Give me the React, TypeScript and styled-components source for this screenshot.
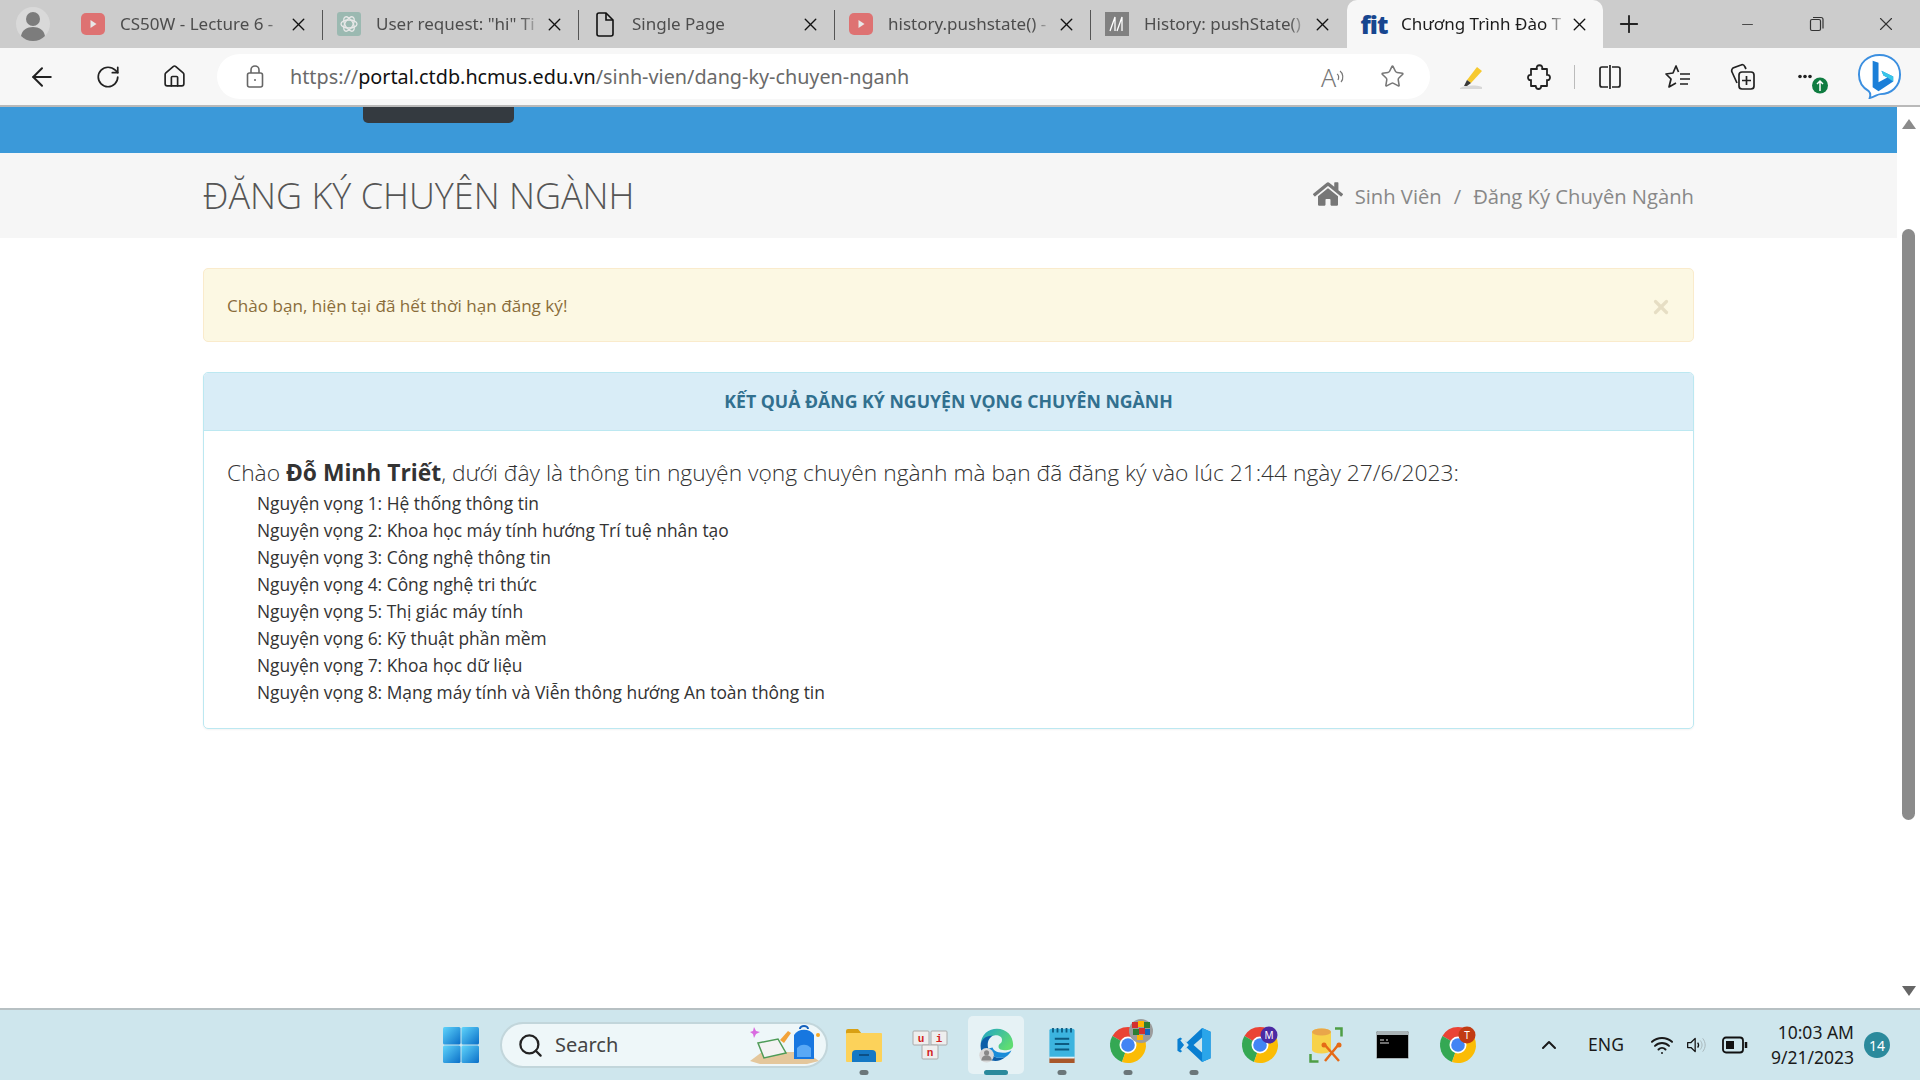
import React from "react";
import styled, { createGlobalStyle } from "styled-components";
import {
  ArrowLeft,
  ChevronUp,
  Home,
  Minus,
  Plus,
  RotateCw,
  Search,
  Star,
  Wifi,
  X,
} from "lucide-react";
import { FaHome } from "react-icons/fa";

const GlobalStyle = createGlobalStyle`
  html, body { margin: 0; padding: 0; height: 100%; overflow: hidden; background: #fff; }
  #root { height: 100%; }
  * { box-sizing: border-box; }
`;

const Screen = styled.div`
  width: 1920px;
  height: 1080px;
  display: flex;
  flex-direction: column;
  font-family: "Open Sans", "Liberation Sans", sans-serif;
  overflow: hidden;
`;

/* browser chrome */
const TabStrip = styled.div`
  height: 48px;
  flex: none;
  display: flex;
  background: #cccccc;
  font-family: "Noto Sans", "Open Sans", sans-serif;
`;

const ProfileSlot = styled.div`
  width: 67px;
  flex: none;
  display: flex;
  justify-content: center;
  align-items: center;
  padding-right: 1px;
`;

const Tab = styled.div<{ $active?: boolean; $last?: boolean }>`
  width: 256px;
  height: 48px;
  flex: none;
  display: flex;
  align-items: center;
  padding-left: ${(p) => (p.$active ? "15px" : "14px")};
  position: relative;
  background: ${(p) => (p.$active ? "#f7f7f7" : "transparent")};
  border-radius: ${(p) => (p.$active ? "10px 10px 0 0" : "0")};
  color: ${(p) => (p.$active ? "#1c1c1c" : "#4d4d4d")};

  &::after {
    content: "";
    display: ${(p) => (p.$active || p.$last ? "none" : "block")};
    position: absolute;
    right: 0;
    top: 10px;
    height: 30px;
    width: 1px;
    background: #555;
  }
`;

const FavSlot = styled.div<{ $dim?: boolean }>`
  width: 24px;
  height: 24px;
  flex: none;
  display: flex;
  align-items: center;
  justify-content: center;
  opacity: ${(p) => (p.$dim ? 0.55 : 1)};
`;

const TabTitle = styled.div`
  margin-left: 15px;
  width: 165px;
  flex: none;
  font-size: 17px;
  padding-bottom: 2px;
  white-space: nowrap;
  overflow: hidden;
  -webkit-mask-image: linear-gradient(to right, #000 88%, transparent 100%);
  mask-image: linear-gradient(to right, #000 88%, transparent 100%);
`;

const TabClose = styled.div`
  margin-left: 1px;
  width: 24px;
  height: 24px;
  display: flex;
  align-items: center;
  justify-content: center;
  color: #111;
`;

const FitLogo = styled.span`
  font-family: "Open Sans", sans-serif;
  font-weight: 800;
  font-size: 25px;
  letter-spacing: -1px;
  color: #17468f;
  line-height: 24px;
`;

const NewTab = styled.div`
  width: 52px;
  flex: none;
  display: flex;
  align-items: center;
  justify-content: center;
  color: #222;
`;

const WindowButtons = styled.div`
  margin-left: auto;
  display: flex;
  color: #333;
`;

const WindowButton = styled.div`
  width: 69px;
  display: flex;
  align-items: center;
  justify-content: center;
`;

const Toolbar = styled.div`
  height: 57px;
  flex: none;
  display: flex;
  align-items: center;
  background: #f7f7f7;
`;

const ToolButton = styled.div<{ $w: number }>`
  width: ${(p) => p.$w}px;
  height: 45px;
  flex: none;
  display: flex;
  align-items: center;
  justify-content: center;
  color: #222;
`;

const AddressBar = styled.div`
  width: 1213px;
  height: 45px;
  flex: none;
  display: flex;
  align-items: center;
  background: #fff;
  border-radius: 23px;
  padding-left: 29px;
  font-family: "Noto Sans", "Open Sans", sans-serif;
  font-size: 19.8px;
  color: #6a6a6a;
`;

const AddressText = styled.div`
  margin-left: 26px;
  padding-bottom: 1px;
  white-space: nowrap;
  & b {
    font-weight: 400;
    color: #111;
  }
`;

const AddressEnd = styled.div`
  margin-left: auto;
  display: flex;
  align-items: center;
  color: #777;
`;

const ReadAloud = styled.div`
  width: 59px;
  display: flex;
  align-items: center;
  justify-content: center;
  font-family: "Noto Sans", sans-serif;
  font-size: 25px;
  font-weight: 300;
  line-height: 30px;
  color: #777;
`;

const StarSlot = styled.div`
  width: 59px;
  margin-right: 8px;
  display: flex;
  align-items: center;
  justify-content: center;
`;

const ToolSep = styled.div`
  width: 1px;
  height: 24px;
  flex: none;
  background: #bbb;
`;

const BrowserRule = styled.div`
  height: 2px;
  flex: none;
  background: #b9b9b9;
`;

/* page */
const Viewport = styled.div`
  flex: 1;
  min-height: 0;
  display: flex;
  background: #fff;
`;

const Page = styled.div`
  flex: 1;
  min-width: 0;
  display: flex;
  flex-direction: column;
`;

const TopBand = styled.div`
  height: 46px;
  flex: none;
  background: #3b99d9;
  padding-left: 363px;
`;

const MenuTab = styled.div`
  width: 151px;
  height: 16px;
  background: #343a40;
  border-radius: 0 0 5px 5px;
`;

const TitleBand = styled.div`
  height: 85px;
  flex: none;
  display: flex;
  align-items: center;
  justify-content: space-between;
  padding: 0 203px;
  background: #f6f6f6;
`;

const PageTitle = styled.h1`
  margin: 0;
  font-size: 36px;
  font-weight: 300;
  color: #555;
`;

const Crumbs = styled.div`
  display: flex;
  align-items: center;
  font-size: 20.2px;
  color: #888;
`;

const CrumbDivider = styled.span`
  margin: 0 12px;
`;

const CrumbIcon = styled.span`
  display: flex;
  margin-right: 12px;
  margin-top: -3px;
`;

const Content = styled.div`
  padding: 30px 203px 0;
  display: flex;
  flex-direction: column;
  gap: 30px;
`;

const Alert = styled.div`
  height: 74px;
  display: flex;
  align-items: center;
  justify-content: space-between;
  padding: 0 23px;
  background: #fcf8e3;
  border: 1px solid #faebcc;
  border-radius: 5px;
  color: #8a6d3b;
  font-size: 17.1px;
`;

const AlertClose = styled.span`
  color: #e6dec4;
  display: flex;
  margin-top: 3px;
  margin-right: -2px;
`;

const Panel = styled.div`
  border: 1px solid #bce8f1;
  border-radius: 5px;
  box-shadow: 0 1px 2px rgba(0, 0, 0, 0.05);
  overflow: hidden;
`;

const PanelHeading = styled.div`
  height: 58px;
  display: flex;
  align-items: center;
  justify-content: center;
  padding-bottom: 2px;
  background: #d9edf7;
  border-bottom: 1px solid #bce8f1;
  color: #31708f;
  font-weight: 700;
  font-size: 17.7px;
`;

const PanelBody = styled.div`
  padding: 26px 23px 22px;
  color: #333;
`;

const Greeting = styled.div`
  font-size: 22.8px;
  font-weight: 300;
  line-height: 32px;
  margin-bottom: 1px;
  & b {
    font-weight: 700;
  }
`;

const Wishes = styled.ul`
  list-style: none;
  margin: 0;
  padding: 0 0 0 30px;
`;

const Wish = styled.li`
  font-size: 17.4px;
  line-height: 27px;
`;

/* scrollbar */
const ScrollTrack = styled.div`
  width: 23px;
  flex: none;
  display: flex;
  flex-direction: column;
  align-items: center;
  background: #fff;
  padding: 12px 0 0;
`;

const ScrollThumb = styled.div`
  width: 13px;
  height: 591px;
  margin-top: 100px;
  border-radius: 7px;
  background: #8b8b8b;
`;

const ScrollArrow = styled.div<{ $down?: boolean }>`
  width: 0;
  height: 0;
  border-left: 7px solid transparent;
  border-right: 7px solid transparent;
  ${(p) => (p.$down ? "border-top: 10px solid #666; margin-top: 166px;" : "border-bottom: 10px solid #8b8b8b;")}
`;

/* taskbar */
const Taskbar = styled.div`
  height: 72px;
  flex: none;
  display: flex;
  align-items: center;
  padding-left: 428px;
  background: #cee6ed;
  border-top: 2px solid #b7c0c3;
  font-family: "Noto Sans", "Open Sans", sans-serif;
  color: #1a1a1a;
`;

const TaskSlot = styled.div<{ $active?: boolean; $dot?: "run" | "main" }>`
  width: 66px;
  height: 70px;
  flex: none;
  display: flex;
  align-items: center;
  justify-content: center;
  position: relative;

  ${(p) =>
    p.$active
      ? `&::before {
    content: "";
    position: absolute;
    left: 5px; right: 5px; top: 6px; bottom: 6px;
    background: #e6f2f5;
    border-radius: 5px;
  }`
      : ""}

  &::after {
    content: "";
    display: ${(p) => (p.$dot ? "block" : "none")};
    position: absolute;
    bottom: 5px;
    left: 50%;
    transform: translateX(-50%);
    height: 5px;
    border-radius: 3px;
    width: ${(p) => (p.$dot === "main" ? "24px" : "9px")};
    background: ${(p) => (p.$dot === "main" ? "#2b8a9c" : "#6b7679")};
  }

  & > svg {
    position: relative;
    z-index: 1;
  }
`;

const SearchPill = styled.div`
  width: 328px;
  height: 46px;
  flex: none;
  margin: 0 3px 0 6px;
  display: flex;
  align-items: center;
  padding-left: 15px;
  background: #eef7f9;
  border: 2px solid #c2d6db;
  border-radius: 23px;
  font-size: 20px;
  color: #444;
`;

const SearchLabel = styled.span`
  margin-left: 11px;
  padding-bottom: 2px;
`;

const SearchArt = styled.div`
  margin-left: auto;
  margin-right: 6px;
  display: flex;
`;

const Tray = styled.div`
  flex: 1;
  display: flex;
  align-items: center;
  height: 100%;
  padding-left: 29px;
`;

const TraySlot = styled.div<{ $w: number }>`
  width: ${(p) => p.$w}px;
  flex: none;
  display: flex;
  align-items: center;
  justify-content: center;
`;

const TrayLang = styled.span`
  font-size: 17.5px;
  padding-bottom: 2px;
`;

const TrayStatus = styled.div`
  margin-left: 4px;
  display: flex;
  align-items: center;
`;

const Clock = styled.div`
  width: 90px;
  flex: none;
  text-align: right;
  font-size: 17.5px;
  line-height: 25px;
  white-space: nowrap;
`;

const Badge = styled.div`
  width: 26px;
  height: 26px;
  margin-left: 10px;
  flex: none;
  display: flex;
  align-items: center;
  justify-content: center;
  background: #2b8a9c;
  border-radius: 50%;
  color: #fff;
  font-size: 14px;
`;

/* drawn icons */
const Avatar = () => (
  <svg width="34" height="34" viewBox="0 0 34 34">
    <circle cx="17" cy="17" r="17" fill="#d9d9d9" />
    <circle cx="17" cy="12" r="7" fill="#7c7c7c" />
    <path d="M5 29c1-6 6-9 12-9s11 3 12 9c-3 3-7 5-12 5S8 32 5 29z" fill="#7c7c7c" />
  </svg>
);

const YoutubeFav = () => (
  <svg width="24" height="22" viewBox="0 0 24 22">
    <rect width="24" height="22" rx="5" fill="#ee2a2a" />
    <path d="M9.500 7l6 4-6 4z" fill="#fff" />
  </svg>
);

const GptFav = () => (
  <svg width="24" height="24" viewBox="0 0 24 24">
    <rect width="24" height="24" rx="3" fill="#74aa9c" />
    <g fill="none" stroke="#fff" strokeWidth="1.300">
      <ellipse cx="12" cy="12" rx="8" ry="4" />
      <ellipse cx="12" cy="12" rx="8" ry="4" transform="rotate(60 12 12)" />
      <ellipse cx="12" cy="12" rx="8" ry="4" transform="rotate(120 12 12)" />
    </g>
  </svg>
);

const PageFav = () => (
  <svg width="20" height="25" viewBox="0 0 20 25" fill="none" stroke="#111" strokeWidth="1.600">
    <path d="M2 3a2 2 0 012-2h7l7 7v14a2 2 0 01-2 2H4a2 2 0 01-2-2z" />
    <path d="M11 1v7h7" />
  </svg>
);

const MdnFav = () => (
  <svg width="24" height="24" viewBox="0 0 24 24">
    <rect width="24" height="24" fill="#808080" />
    <path d="M5 19L10 5v14M12 19l5-14v14" fill="none" stroke="#fff" strokeWidth="1.300" />
  </svg>
);

const AddressLock = () => (
  <svg width="18" height="24" viewBox="0 0 18 24" fill="none" stroke="#666" strokeWidth="1.600">
    <rect x="1.500" y="8" width="15" height="14" rx="2" />
    <path d="M5 8V5a4 4 0 018 0v3" />
    <circle cx="9" cy="15" r="1" fill="#666" stroke="none" />
  </svg>
);

const Highlighter = () => (
  <svg width="26" height="26" viewBox="0 0 26 26">
    <path d="M2 24c6-3 16-3 22-1v2H2z" fill="#d8d8d8" />
    <path d="M9 16L19 3l5 4-11 12z" fill="#f6c92f" />
    <path d="M9 16l4 3-4 3-3 0z" fill="#3a3a3a" />
  </svg>
);

const PuzzleIcon = () => (
  <svg width="26" height="28" viewBox="0 0 26 28" fill="none" stroke="#222" strokeWidth="1.800">
    <path d="M9 6h3c-2-5 7-5 5 0h5v6c4-1 4 6 0 5v6h-6c1 4-6 4-5 0H6v-6c-4 1-4-6 0-5V6z" strokeLinejoin="round" />
  </svg>
);

const SplitIcon = () => (
  <svg width="24" height="26" viewBox="0 0 24 26" fill="none" stroke="#222" strokeWidth="1.700">
    <path d="M10 3H4a2 2 0 00-2 2v16a2 2 0 002 2h6M14 3h6a2 2 0 012 2v16a2 2 0 01-2 2h-6" />
    <path d="M12 1v24" />
  </svg>
);

const FavoritesIcon = () => (
  <svg width="26" height="26" viewBox="0 0 26 26" fill="none" stroke="#222" strokeWidth="1.700">
    <path d="M13.500 8L11 2 8 9l-7 1 5 5-2 8 7-4" strokeLinejoin="round" />
    <path d="M15 10h10M15 15h10M15 20h8" />
  </svg>
);

const CollectionsIcon = () => (
  <svg width="26" height="28" viewBox="0 0 26 28" fill="none" stroke="#222" strokeWidth="1.700">
    <path d="M7 20L2 9c-1-2 0-3 1-4l8-3c2-1 3 0 4 2l1 2" />
    <rect x="9" y="9" width="15" height="17" rx="3" />
    <path d="M16.500 13v9M12 17.500h9" />
  </svg>
);

const MoreIcon = () => (
  <svg width="44" height="36" viewBox="0 0 44 36">
    <circle cx="16" cy="17.500" r="1.800" fill="#222" />
    <circle cx="21" cy="17.500" r="1.800" fill="#222" />
    <circle cx="26" cy="17.500" r="1.800" fill="#222" />
    <circle cx="36" cy="26.500" r="8" fill="#107c41" />
    <path d="M36 32v-10M33 25l3-3 3 3" stroke="#fff" strokeWidth="1.500" fill="none" />
  </svg>
);

const BingIcon = () => (
  <svg width="47" height="45" viewBox="0 0 46 46">
    <path d="M23 1c12 0 21 8 21 20 0 12-9 20-20 20-3 0-6 3-11 4 1-3 1-5-1-7C5 34 2 28 2 21 2 9 11 1 23 1z" fill="#fff" stroke="#3b8fe0" strokeWidth="2" />
    <path d="M16 7l6 2v20l9-5-4-2-2-5 12 6v5L22 38l-6-4z" fill="#1b7fd8" />
    <path d="M25 17l12 6v5l-6-4-4-2z" fill="#38c6e8" />
  </svg>
);

const StartIcon = () => (
  <svg width="36" height="36" viewBox="0 0 36 36">
    <defs>
      <linearGradient id="st" x1="0" y1="0" x2="1" y2="1">
        <stop offset="0" stopColor="#5fd4fb" />
        <stop offset="1" stopColor="#0a6fc8" />
      </linearGradient>
    </defs>
    <rect x="0" y="0" width="17.500" height="17.500" rx="1.500" fill="url(#st)" />
    <rect x="18.500" y="0" width="17.500" height="17.500" rx="1.500" fill="url(#st)" />
    <rect x="0" y="18.500" width="17.500" height="17.500" rx="1.500" fill="url(#st)" />
    <rect x="18.500" y="18.500" width="17.500" height="17.500" rx="1.500" fill="url(#st)" />
  </svg>
);

const SearchArtwork = () => (
  <svg width="70" height="40" viewBox="0 0 70 40">
    <path d="M0 36l12-9h44l13 9-12 3H10z" fill="#e4c79c" />
    <path d="M8 18l20-4 8 14-22 5z" fill="#f3f3f3" stroke="#4e9b57" strokeWidth="1.500" />
    <path d="M30 15l8-9 3 2-7 10z" fill="#f2a33a" />
    <path d="M44 10a12 12 0 0120 0v24H44z" fill="#1777e0" />
    <path d="M47 23a9 9 0 0114 0v9H47z" fill="#5aa9f6" />
    <path d="M50 4a4 3 0 018 0" fill="none" stroke="#1561bd" strokeWidth="2" />
    <circle cx="68" cy="10" r="2" fill="#f7a823" />
    <path d="M4 2l2 4 4 1-4 2-2 4-1-4-3-2 3-1z" fill="#d96be0" />
  </svg>
);

const FolderIcon = () => (
  <svg width="36" height="34" viewBox="0 0 36 34">
    <path d="M0 3a2 2 0 012-2h10l4 5H0z" fill="#d9a013" />
    <rect x="0" y="5" width="36" height="29" rx="1" fill="#fcd25a" />
    <path d="M6 34v-8a4 4 0 014-4h16a4 4 0 014 4v8z" fill="#1578c4" />
    <rect x="13" y="26" width="10" height="2" fill="#0c4f86" />
  </svg>
);

const KeyCap = ({ x, y, letter }: { x: number; y: number; letter: string }) => (
  <g>
    <rect x={x} y={y} width="16" height="14" rx="1" fill="#eeeeee" stroke="#aaa" />
    <text x={x + 8} y={y + 10.500} fontSize="11" fontWeight="700" textAnchor="middle" fill="#d21f1f" fontFamily="Liberation Mono, monospace">{letter}</text>
  </g>
);

const UnikeyIcon = () => (
  <svg width="36" height="30" viewBox="0 0 36 30">
    <KeyCap x={1} y={1} letter="u" />
    <KeyCap x={19} y={1} letter="i" />
    <KeyCap x={10} y={15} letter="n" />
  </svg>
);

const EdgeIcon = () => (
  <svg width="36" height="36" viewBox="0 0 40 42">
    <defs>
      <linearGradient id="ed" x1="0" y1="0" x2="1" y2="0.600">
        <stop offset="0" stopColor="#1fa2c9" />
        <stop offset="1" stopColor="#5fdc72" />
      </linearGradient>
    </defs>
    <path d="M2 22C2 8 12 2 21 2c11 0 19 8 19 19 0 4-3 6-8 6-6 0-9-1-9-4 0-4 4-3 4-8 0-4-5-6-9-5C10 11 2 14 2 22z" fill="url(#ed)" />
    <path d="M2 22c0-9 8-12 15-12-5 2-8 8-6 15 2 8 9 13 20 10-5 5-12 5-16 4C8 37 2 31 2 22z" fill="#0c5ea8" />
    <path d="M11 25c2 8 9 13 20 10 3-2 6-5 7-8-3 2-6 3-10 3-8 0-11-3-12-6z" fill="#1a8cd8" />
    <circle cx="9" cy="33" r="8.500" fill="#d8d8d8" />
    <circle cx="9" cy="30" r="3" fill="#888" />
    <path d="M3 39c0-4 3-6 6-6s6 2 6 6z" fill="#888" />
  </svg>
);

const NotepadIcon = () => (
  <svg width="28" height="36" viewBox="0 0 30 40">
    <rect x="1" y="2" width="28" height="33" rx="2" fill="#3cb4df" />
    <rect x="1" y="34" width="28" height="6" fill="#a8572a" />
    <rect x="1" y="33" width="28" height="2" fill="#dff1f7" />
    <path d="M5 1v5M10 1v5M15 1v5M20 1v5M25 1v5" stroke="#0c5a80" strokeWidth="2" />
    <path d="M7 13h16M7 19h16M7 25h16" stroke="#0c5a80" strokeWidth="2.200" />
  </svg>
);

const ChromeIcon = ({ kind }: { kind: "cube" | "m" | "t" }) => (
  <svg width="36" height="36" viewBox="0 0 36 36" overflow="visible">
    <path d="M18 18L2.400 9A18 18 0 0133.600 9z" fill="#ea4335" />
    <path d="M18 18L2.400 9A18 18 0 0012 35z" fill="#34a853" />
    <path d="M18 18L33.600 9A18 18 0 0112 35z" fill="#fbbc05" />
    <circle cx="18" cy="18" r="8.500" fill="#fff" />
    <circle cx="18" cy="18" r="6.800" fill="#4285f4" />
    {kind === "m" && (
      <g>
        <circle cx="27" cy="8" r="8.500" fill="#4b2aa3" />
        <text x="27" y="11.500" fontSize="10" fill="#fff" textAnchor="middle" fontFamily="Noto Sans, sans-serif">M</text>
      </g>
    )}
    {kind === "t" && (
      <g>
        <circle cx="27" cy="8" r="8.500" fill="#c23b12" />
        <text x="27" y="11.500" fontSize="10" fill="#fff" textAnchor="middle" fontFamily="Noto Sans, sans-serif">T</text>
      </g>
    )}
    {kind === "cube" && (
      <g>
        <circle cx="31" cy="4" r="12" fill="#9c9c9c" />
        <rect x="22" y="-5" width="6" height="6" fill="#d32f2f" />
        <rect x="28" y="-6" width="6" height="6" fill="#ffb300" />
        <rect x="34" y="-5" width="6" height="6" fill="#2e7d32" />
        <rect x="23" y="2" width="6" height="6" fill="#2e7d32" />
        <rect x="29" y="1" width="6" height="6" fill="#d32f2f" />
        <rect x="35" y="2" width="5" height="6" fill="#1565c0" />
        <rect x="27" y="8" width="6" height="5" fill="#ffb300" />
      </g>
    )}
  </svg>
);

const VsCodeIcon = () => (
  <svg width="35" height="36" viewBox="0 0 36 38">
    <path d="M26 1l9 4v28l-9 4-16-15-7 5-3-2v-12l3-2 7 5z" fill="#0a7fd1" />
    <path d="M26 1l9 4v28l-9 4z" fill="#2aa5ea" />
    <path d="M26 11l-9 8 9 8z" fill="#cee6ed" />
    <path d="M3 14l3-2 6 7-6 7-3-2 4-5z" fill="#cee6ed" />
  </svg>
);

const ToolsIcon = () => (
  <svg width="34" height="36" viewBox="0 0 34 36">
    <path d="M3 5a9.500 3.500 0 0119 0v18a9.500 3.500 0 01-19 0z" fill="#f7d24a" />
    <ellipse cx="12.500" cy="5" rx="9.500" ry="3.500" fill="#e9a64a" />
    <path d="M26 1.500h6.500v8M1.500 27v7.500h8" fill="none" stroke="#4f9e45" strokeWidth="2.500" />
    <path d="M15 17l15 17M30 17L16 34" stroke="#e56a17" strokeWidth="2.500" />
    <circle cx="15" cy="18" r="2.500" fill="#e56a17" />
    <circle cx="30" cy="18" r="2.500" fill="#e56a17" />
  </svg>
);

const TerminalIcon = () => (
  <svg width="33" height="28" viewBox="0 0 33 28">
    <rect x="0.500" y="0.500" width="32" height="27" rx="1" fill="#000" stroke="#a9b3b6" />
    <rect x="1" y="1" width="31" height="3" fill="#a9b3b6" />
    <path d="M4 9h4M10 9h2M4 12h9" stroke="#e0e0e0" strokeWidth="1.200" />
  </svg>
);

const VolumeIcon = () => (
  <svg width="26" height="26" viewBox="0 0 24 24" fill="none" stroke="#111" strokeWidth="1.500">
    <path d="M2 9v6h4l5 5V4L6 9z" strokeLinejoin="round" />
    <path d="M14 9c1.500 2 1.500 4 0 6" />
    <path d="M17 6.500c3 3.500 3 7.500 0 11M20 4c4 5 4 11 0 16" stroke="#a9b8bc" strokeWidth="1.200" />
  </svg>
);

const BatteryIcon = () => (
  <svg width="26" height="18" viewBox="0 0 26 18" fill="none" stroke="#111" strokeWidth="1.800">
    <rect x="1" y="1.500" width="20" height="15" rx="3" />
    <rect x="4" y="5" width="8" height="8" fill="#111" stroke="none" />
    <path d="M24 6v6" strokeWidth="2.500" />
  </svg>
);

const tabs = [
  { key: "cs50", title: "CS50W - Lecture 6 -", fav: <YoutubeFav />, dim: true },
  { key: "gpt", title: "User request: \"hi\" Ti", fav: <GptFav />, dim: true },
  { key: "single", title: "Single Page", fav: <PageFav /> },
  { key: "push", title: "history.pushstate() -", fav: <YoutubeFav />, dim: true },
  { key: "mdn", title: "History: pushState()", fav: <MdnFav />, last: true },
];

const wishes = [
  "Hệ thống thông tin",
  "Khoa học máy tính hướng Trí tuệ nhân tạo",
  "Công nghệ thông tin",
  "Công nghệ tri thức",
  "Thị giác máy tính",
  "Kỹ thuật phần mềm",
  "Khoa học dữ liệu",
  "Mạng máy tính và Viễn thông hướng An toàn thông tin",
];

export default function App() {
  return (
    <Screen>
      <GlobalStyle />
      <TabStrip>
        <ProfileSlot>
          <Avatar />
        </ProfileSlot>
        {tabs.map((t) => (
          <Tab key={t.key} $last={t.last}>
            <FavSlot $dim={t.dim}>{t.fav}</FavSlot>
            <TabTitle>{t.title}</TabTitle>
            <TabClose>
              <X size={21} strokeWidth={1.6} />
            </TabClose>
          </Tab>
        ))}
        <Tab $active>
          <FavSlot>
            <FitLogo>fit</FitLogo>
          </FavSlot>
          <TabTitle>Chương Trình Đào T</TabTitle>
          <TabClose>
            <X size={21} strokeWidth={1.6} />
          </TabClose>
        </Tab>
        <NewTab>
          <Plus size={28} strokeWidth={1.6} />
        </NewTab>
        <WindowButtons>
          <WindowButton>
            <Minus size={17} strokeWidth={1.2} />
          </WindowButton>
          <WindowButton>
            <svg width="16" height="16" viewBox="0 0 16 16" fill="none" stroke="#333" strokeWidth="1.200">
              <rect x="1.500" y="3.500" width="10" height="11" rx="1.500" />
              <path d="M4 1.500h8a2 2 0 012 2v9" />
            </svg>
          </WindowButton>
          <WindowButton>
            <X size={22} strokeWidth={1.2} />
          </WindowButton>
        </WindowButtons>
      </TabStrip>

      <Toolbar>
        <ToolButton $w={84}>
          <ArrowLeft size={30} strokeWidth={1.6} />
        </ToolButton>
        <ToolButton $w={48}>
          <RotateCw size={26} strokeWidth={1.6} />
        </ToolButton>
        <ToolButton $w={85}>
          <Home size={25} strokeWidth={1.6} />
        </ToolButton>
        <AddressBar>
          <AddressLock />
          <AddressText>
            https://<b>portal.ctdb.hcmus.edu.vn</b>/sinh-vien/dang-ky-chuyen-nganh
          </AddressText>
          <AddressEnd>
            <ReadAloud>
              A
              <svg width="10" height="16" viewBox="0 0 10 16" fill="none" stroke="#777" strokeWidth="1.200">
                <path d="M1 5c2 1 2 4 1 6M4 2c3 2 4 8 1 11" />
              </svg>
            </ReadAloud>
            <StarSlot>
              <Star size={25} strokeWidth={1.5} />
            </StarSlot>
          </AddressEnd>
        </AddressBar>
        <ToolButton $w={82}>
          <Highlighter />
        </ToolButton>
        <ToolButton $w={52}>
          <PuzzleIcon />
        </ToolButton>
        <ToolButton $w={20}>
          <ToolSep />
        </ToolButton>
        <ToolButton $w={52}>
          <SplitIcon />
        </ToolButton>
        <ToolButton $w={84}>
          <FavoritesIcon />
        </ToolButton>
        <ToolButton $w={46}>
          <CollectionsIcon />
        </ToolButton>
        <ToolButton $w={80}>
          <MoreIcon />
        </ToolButton>
        <ToolButton $w={66}>
          <BingIcon />
        </ToolButton>
      </Toolbar>
      <BrowserRule />

      <Viewport>
        <Page>
          <TopBand>
            <MenuTab />
          </TopBand>
          <TitleBand>
            <PageTitle>ĐĂNG KÝ CHUYÊN NGÀNH</PageTitle>
            <Crumbs>
              <CrumbIcon>
                <FaHome size={30} color="#777" />
              </CrumbIcon>
              Sinh Viên
              <CrumbDivider>/</CrumbDivider>
              Đăng Ký Chuyên Ngành
            </Crumbs>
          </TitleBand>
          <Content>
            <Alert>
              Chào bạn, hiện tại đã hết thời hạn đăng ký!
              <AlertClose>
                <X size={22} strokeWidth={3.5} />
              </AlertClose>
            </Alert>
            <Panel>
              <PanelHeading>KẾT QUẢ ĐĂNG KÝ NGUYỆN VỌNG CHUYÊN NGÀNH</PanelHeading>
              <PanelBody>
                <Greeting>
                  Chào <b>Đỗ Minh Triết</b>, dưới đây là thông tin nguyện vọng chuyên ngành mà bạn đã đăng ký vào lúc 21:44 ngày 27/6/2023:
                </Greeting>
                <Wishes>
                  {wishes.map((w, i) => (
                    <Wish key={w}>
                      Nguyện vọng {i + 1}: {w}
                    </Wish>
                  ))}
                </Wishes>
              </PanelBody>
            </Panel>
          </Content>
        </Page>
        <ScrollTrack>
          <ScrollArrow />
          <ScrollThumb />
          <ScrollArrow $down />
        </ScrollTrack>
      </Viewport>

      <Taskbar>
        <TaskSlot>
          <StartIcon />
        </TaskSlot>
        <SearchPill>
          <Search size={27} strokeWidth={2} color="#222" />
          <SearchLabel>Search</SearchLabel>
          <SearchArt>
            <SearchArtwork />
          </SearchArt>
        </SearchPill>
        <TaskSlot $dot="run">
          <FolderIcon />
        </TaskSlot>
        <TaskSlot>
          <UnikeyIcon />
        </TaskSlot>
        <TaskSlot $active $dot="main">
          <EdgeIcon />
        </TaskSlot>
        <TaskSlot $dot="run">
          <NotepadIcon />
        </TaskSlot>
        <TaskSlot $dot="run">
          <ChromeIcon kind="cube" />
        </TaskSlot>
        <TaskSlot $dot="run">
          <VsCodeIcon />
        </TaskSlot>
        <TaskSlot>
          <ChromeIcon kind="m" />
        </TaskSlot>
        <TaskSlot>
          <ToolsIcon />
        </TaskSlot>
        <TaskSlot>
          <TerminalIcon />
        </TaskSlot>
        <TaskSlot>
          <ChromeIcon kind="t" />
        </TaskSlot>
        <Tray>
          <TraySlot $w={58}>
            <ChevronUp size={24} strokeWidth={2} />
          </TraySlot>
          <TraySlot $w={56}>
            <TrayLang>ENG</TrayLang>
          </TraySlot>
          <TrayStatus>
            <TraySlot $w={48}>
              <Wifi size={24} strokeWidth={2} />
            </TraySlot>
            <TraySlot $w={20}>
              <VolumeIcon />
            </TraySlot>
            <TraySlot $w={58}>
              <BatteryIcon />
            </TraySlot>
          </TrayStatus>
          <Clock>
            10:03 AM
            <br />
            9/21/2023
          </Clock>
          <Badge>14</Badge>
        </Tray>
      </Taskbar>
    </Screen>
  );
}
